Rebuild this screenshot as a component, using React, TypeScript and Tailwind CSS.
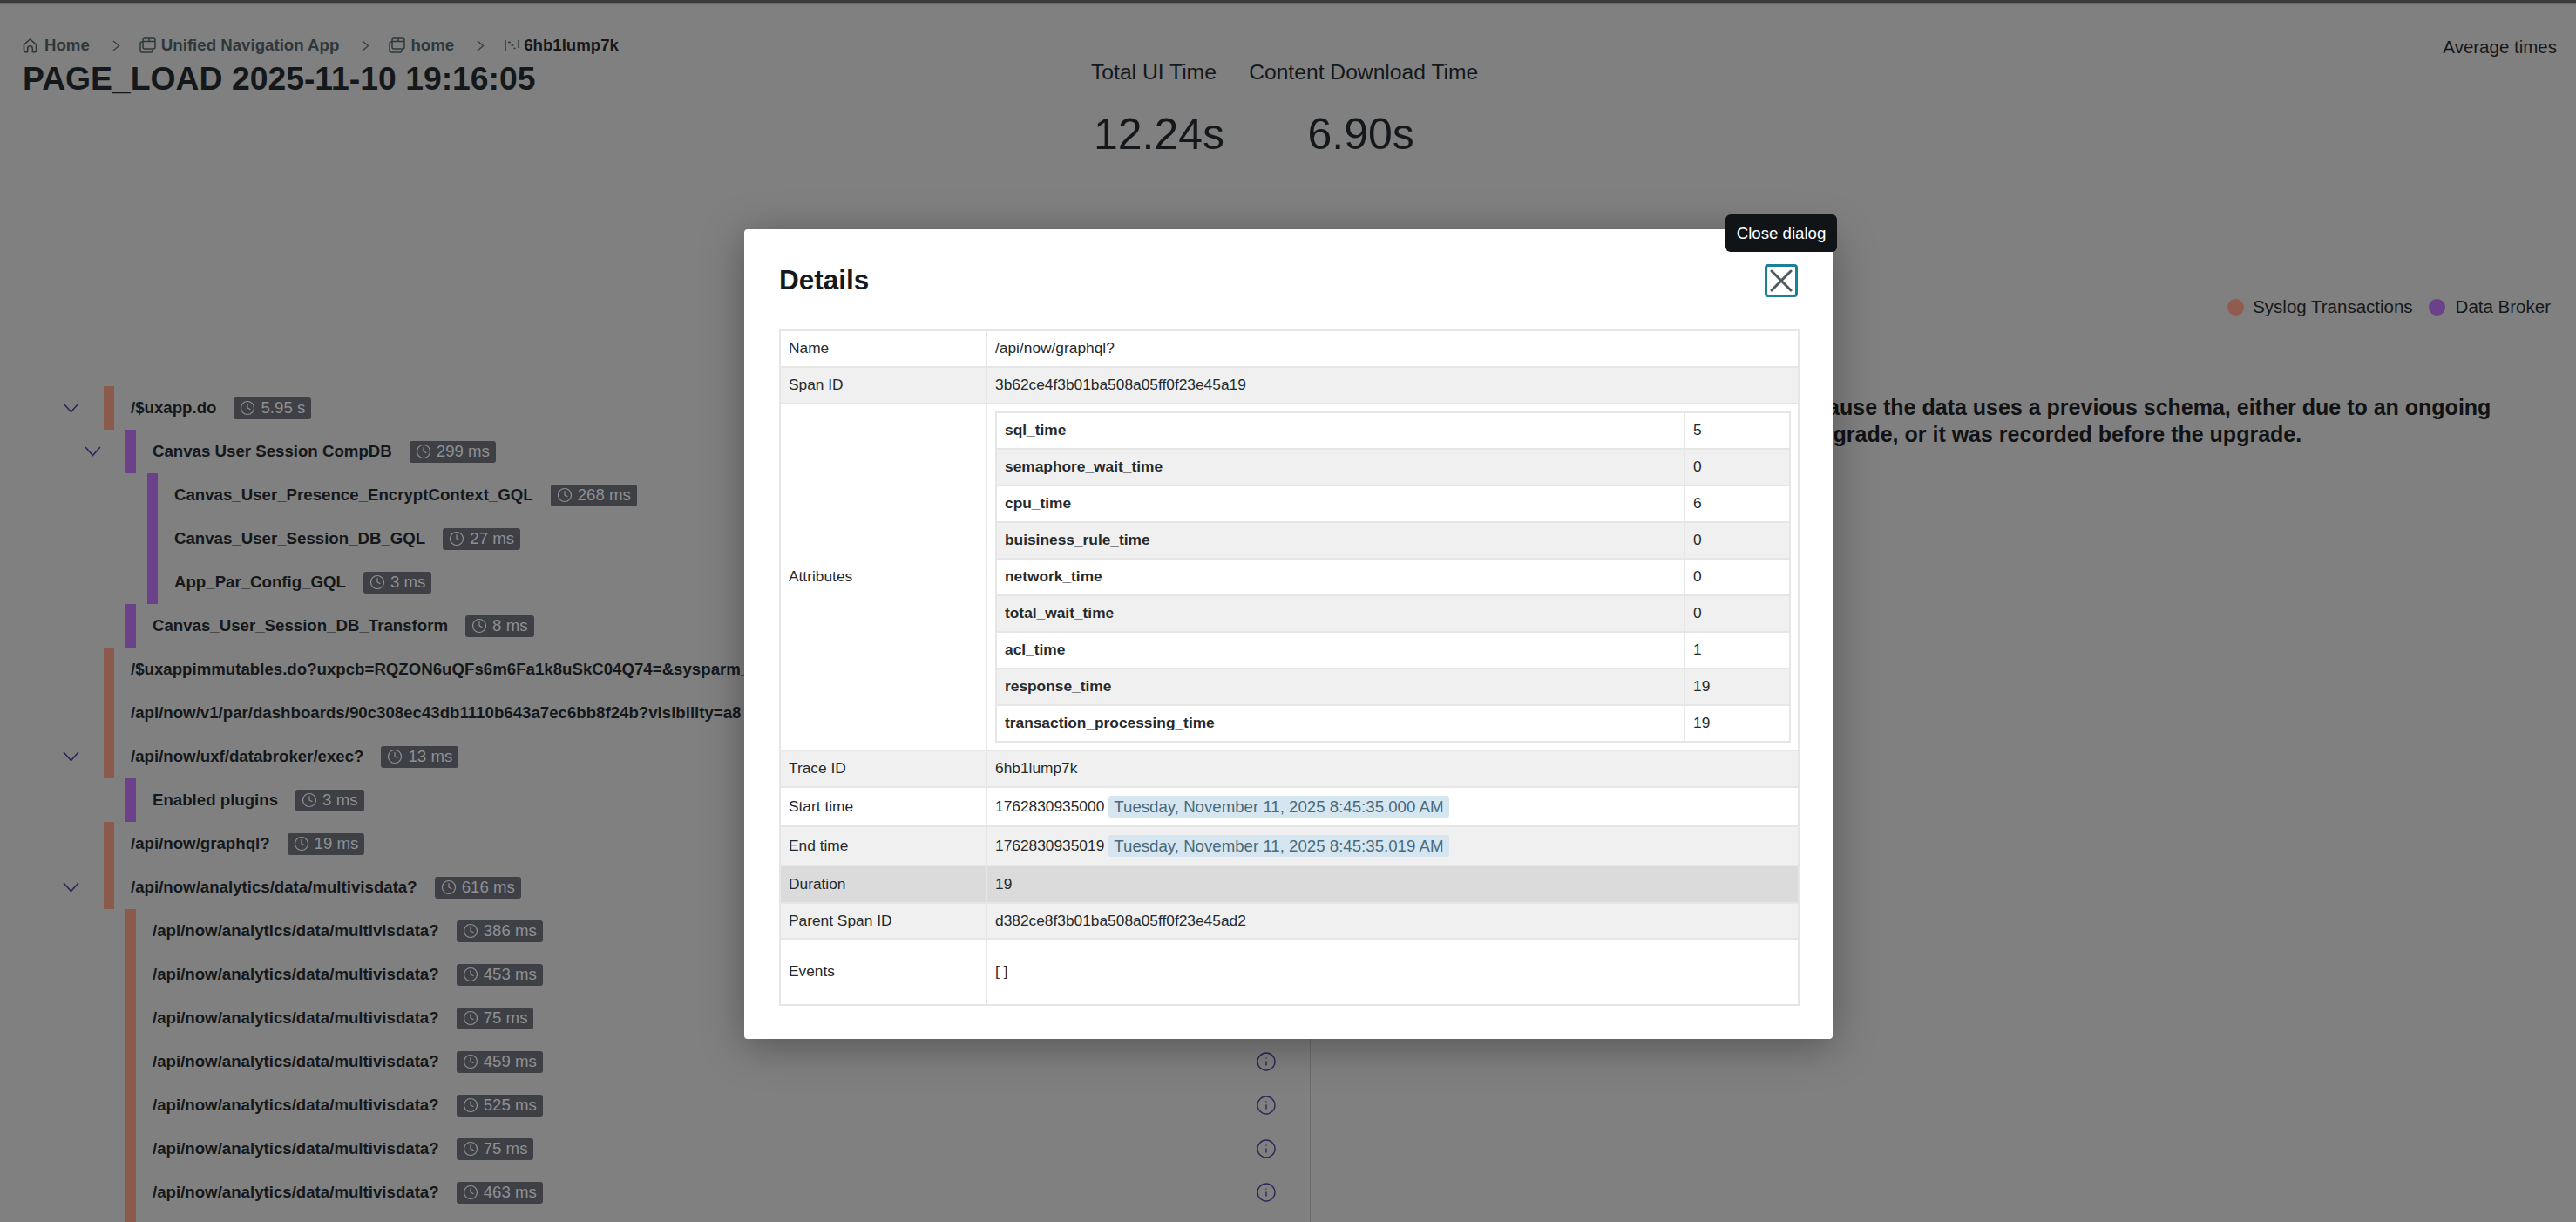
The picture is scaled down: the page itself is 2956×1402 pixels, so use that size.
import { Clock, Info } from "lucide-react";

type Level = 0 | 1 | 2;
type Row = { name: string; level: Level; kind: "s" | "d"; time?: string; open?: boolean };

const rows: Row[] = [
  { name: "/$uxapp.do", level: 0, kind: "s", time: "5.95 s", open: true },
  { name: "Canvas User Session CompDB", level: 1, kind: "d", time: "299 ms", open: true },
  { name: "Canvas_User_Presence_EncryptContext_GQL", level: 2, kind: "d", time: "268 ms" },
  { name: "Canvas_User_Session_DB_GQL", level: 2, kind: "d", time: "27 ms" },
  { name: "App_Par_Config_GQL", level: 2, kind: "d", time: "3 ms" },
  { name: "Canvas_User_Session_DB_Transform", level: 1, kind: "d", time: "8 ms" },
  { name: "/$uxappimmutables.do?uxpcb=RQZON6uQFs6m6Fa1k8uSkC04Q74=&sysparm_", level: 0, kind: "s" },
  { name: "/api/now/v1/par/dashboards/90c308ec43db1110b643a7ec6bb8f24b?visibility=a8", level: 0, kind: "s" },
  { name: "/api/now/uxf/databroker/exec?", level: 0, kind: "s", time: "13 ms", open: true },
  { name: "Enabled plugins", level: 1, kind: "d", time: "3 ms" },
  { name: "/api/now/graphql?", level: 0, kind: "s", time: "19 ms" },
  { name: "/api/now/analytics/data/multivisdata?", level: 0, kind: "s", time: "616 ms", open: true },
  { name: "/api/now/analytics/data/multivisdata?", level: 1, kind: "s", time: "386 ms" },
  { name: "/api/now/analytics/data/multivisdata?", level: 1, kind: "s", time: "453 ms" },
  { name: "/api/now/analytics/data/multivisdata?", level: 1, kind: "s", time: "75 ms" },
  { name: "/api/now/analytics/data/multivisdata?", level: 1, kind: "s", time: "459 ms" },
  { name: "/api/now/analytics/data/multivisdata?", level: 1, kind: "s", time: "525 ms" },
  { name: "/api/now/analytics/data/multivisdata?", level: 1, kind: "s", time: "75 ms" },
  { name: "/api/now/analytics/data/multivisdata?", level: 1, kind: "s", time: "463 ms" },
  { name: "/api/now/analytics/data/multivisdata?", level: 1, kind: "s", time: "75 ms" },
];

const attrs: [string, string][] = [
  ["sql_time", "5"],
  ["semaphore_wait_time", "0"],
  ["cpu_time", "6"],
  ["buisiness_rule_time", "0"],
  ["network_time", "0"],
  ["total_wait_time", "0"],
  ["acl_time", "1"],
  ["response_time", "19"],
  ["transaction_processing_time", "19"],
];

const indent: Record<Level, string> = { 0: "pl-[72px]", 1: "pl-[97px]", 2: "pl-[122px]" };

function Chevron() {
  return (
    <svg width="19" height="12" viewBox="0 0 19 12" fill="none" className="text-[#2b2858]">
      <path d="M1 1l8.5 9.5L18 1" stroke="currentColor" strokeWidth="1.6" />
    </svg>
  );
}

function HomeIcon() {
  return (
    <svg width="17" height="17" viewBox="0 0 17 17" fill="none" stroke="#2e383b" strokeWidth="1.6" strokeLinejoin="round">
      <path d="M1.5 7.2L8.5 1l7 6.2v7.3a1.3 1.3 0 0 1-1.3 1.3h-2.9v-4.2a2.8 2.8 0 0 0-5.6 0v4.2H2.8a1.3 1.3 0 0 1-1.3-1.3z" />
    </svg>
  );
}

function AppIcon() {
  return (
    <svg width="19" height="18" viewBox="0 0 19 18" fill="none" stroke="#2e383b" strokeWidth="1.5">
      <rect x="4" y="1" width="14" height="12" rx="2" />
      <path d="M4 4.5h14M11 1v3.5" />
      <path d="M4 5H3a2 2 0 0 0-2 2v8a2 2 0 0 0 2 2h10a2 2 0 0 0 2-2v-1.500" />
    </svg>
  );
}

function TraceIcon() {
  return (
    <svg width="17" height="13" viewBox="0 0 17 13" fill="none" stroke="#2e383b" strokeWidth="1.5">
      <path d="M1 0v13M16 0v9" />
      <path d="M4 2.500h3M7.500 6h3M10.500 9.500h2" />
    </svg>
  );
}

function Sep({ className }: { className: string }) {
  return (
    <svg width="9" height="13" viewBox="0 0 9 13" fill="none" stroke="#3a4144" strokeWidth="1.5" className={className}>
      <path d="M1 1l6.500 5.500L1 12" />
    </svg>
  );
}

function CloseIcon() {
  return (
    <svg width="26" height="26" viewBox="0 0 26 26" fill="none" stroke="#4b5a60" strokeWidth="3" strokeLinecap="round">
      <path d="M2 2l22 22M24 2L2 24" />
    </svg>
  );
}

function Badge({ time }: { time: string }) {
  return (
    <span className="ml-5 flex h-[25px] shrink-0 items-center gap-[6px] rounded-[3px] bg-[#3f4046] pl-[7px] pr-[7px] text-[18.67px] text-[#8d9094]">
      <Clock size={18} strokeWidth={1.6} />
      {time}
    </span>
  );
}

function TreeRow({ row }: { row: Row }) {
  return (
    <div className={`flex h-[50px] shrink-0 items-stretch pr-[38px] ${indent[row.level]}`}>
      <div className="flex w-[47px] shrink-0 items-center">{row.open ? <Chevron /> : null}</div>
      <div className={`w-3 shrink-0 ${row.kind === "s" ? "bg-[#8c5a4d]" : "bg-[#6b4289]"}`} />
      <div className="ml-[19px] flex min-w-0 items-center">
        <span className="whitespace-nowrap text-[18.67px] font-bold text-[#15181b]">{row.name}</span>
        {row.time ? <Badge time={row.time} /> : null}
      </div>
      <div className="ml-auto flex shrink-0 items-center">
        <Info size={24} strokeWidth={1.4} className="text-[#2b2858]" />
      </div>
    </div>
  );
}

function Stamp({ ms, date }: { ms: string; date: string }) {
  return (
    <span className="flex items-center">
      {ms}
      <span className="ml-[5px] rounded-[3px] bg-[#d5e6f0] px-[6px] py-[1px] text-[18.67px] leading-[23px] text-[#4b6a7b]">{date}</span>
    </span>
  );
}

const td = "border-2 border-[#e6e6e6] px-[9px] align-middle";

function MainRow({ label, bg, h, children }: { label: string; bg: string; h: string; children: React.ReactNode }) {
  return (
    <tr className={`${bg} ${h}`}>
      <td className={td}>{label}</td>
      <td className={td}>{children}</td>
    </tr>
  );
}

export default function App() {
  return (
    <div className="relative flex h-[1402px] w-full flex-col overflow-hidden bg-[#808080] font-['Liberation_Sans',Arial,sans-serif] text-[#15181b]">
      <div className="h-[5px] shrink-0 border-b border-[#6b6b6b] bg-[#3b3b3b]" />

      <header className="flex h-[332px] shrink-0 pl-[26px] pr-[22px]">
        <div className="w-[1226px] shrink-0 pt-[35px]">
          <nav className="flex h-6 items-center text-[18.67px] font-bold text-[#2e383b]">
            <HomeIcon />
            <span className="ml-2">Home</span>
            <Sep className="ml-[26px] mr-[22px]" />
            <AppIcon />
            <span className="ml-[6px]">Unified Navigation App</span>
            <Sep className="ml-[26px] mr-[22px]" />
            <AppIcon />
            <span className="ml-[6px]">home</span>
            <Sep className="ml-[26px] mr-[23px]" />
            <TraceIcon />
            <span className="ml-[5px] text-[#15181b]">6hb1lump7k</span>
          </nav>
          <h1 className="mt-[4px] text-[37.33px] font-bold leading-[44px]">PAGE_LOAD 2025-11-10 19:16:05</h1>
        </div>

        <div className="flex gap-[28px] pt-[63px]">
          <div>
            <div className="text-[24.67px] leading-[30px]">Total UI Time</div>
            <div className="mt-[26px] pl-[3px] text-[50px] leading-[60px]">12.24s</div>
          </div>
          <div className="text-center">
            <div className="text-[24.67px] leading-[30px]">Content Download Time</div>
            <div className="mt-[26px] pr-[6px] text-[50px] leading-[60px]">6.90s</div>
          </div>
        </div>

        <div className="ml-auto pt-[37px] text-[20.5px] leading-[24px]">Average times</div>
      </header>

      <div className="flex h-[30px] shrink-0 items-center justify-end pr-[29px] text-[20.5px]">
        <span className="h-[19px] w-[19px] rounded-full bg-[#8f5c4f]" />
        <span className="ml-[10px]">Syslog Transactions</span>
        <span className="ml-[18px] h-[19px] w-[19px] rounded-full bg-[#6b4289]" />
        <span className="ml-3">Data Broker</span>
      </div>

      <main className="mt-[76px] flex min-h-0 flex-1">
        <section className="flex w-[1504px] shrink-0 flex-col overflow-hidden border-r border-[#6c6c6c]">
          {rows.map((row, i) => (
            <TreeRow key={i} row={row} />
          ))}
        </section>
        <section className="min-w-0 flex-1 whitespace-nowrap pt-[9px] text-[25px] font-bold leading-[31px] text-[#101214]">
          <div className="pl-[550px]">because the data uses a previous schema, either due to an ongoing</div>
          <div className="pl-[569px]">upgrade, or it was recorded before the upgrade.</div>
        </section>
      </main>

      <div className="absolute inset-0 flex justify-center pl-[1px] pt-[263px]">
        <div className="h-[929px] w-[1249px] rounded-[4px] bg-white pl-[40px] pr-[38px] pt-[40px] text-[17.33px] text-[#262a2d] shadow-[0_8px_48px_rgba(0,0,0,0.35)]">
          <div className="flex h-[38px] items-center justify-between pr-[2px]">
            <h2 className="text-[31.5px] font-bold text-[#15191c]">Details</h2>
            <div className="relative h-[38px] w-[38px]">
              <button className="flex h-[38px] w-[38px] items-center justify-center rounded-[4px] border-[3px] border-[#1a809a]">
                <CloseIcon />
              </button>
              <div className="absolute -top-[57px] left-1/2 flex h-[43px] w-[128px] -translate-x-1/2 items-center justify-center whitespace-nowrap rounded-[6px] bg-[#101416] text-[18.67px] text-white">
                Close dialog
              </div>
            </div>
          </div>

          <table className="mt-[37px] w-[1171px] table-fixed border-collapse">
            <colgroup>
              <col className="w-[237px]" />
              <col />
            </colgroup>
            <tbody>
              <MainRow label="Name" bg="bg-white" h="h-[42px]">/api/now/graphql?</MainRow>
              <MainRow label="Span ID" bg="bg-[#f0f0f0]" h="h-[42px]">3b62ce4f3b01ba508a05ff0f23e45a19</MainRow>
              <MainRow label="Attributes" bg="bg-white" h="h-[398px]">
                <table className="w-[913px] table-fixed border-collapse">
                  <colgroup>
                    <col className="w-[790px]" />
                    <col />
                  </colgroup>
                  <tbody>
                    {attrs.map(([k, v], i) => (
                      <tr key={k} className={`h-[42px] ${i % 2 ? "bg-[#f0f0f0]" : "bg-white"}`}>
                        <td className={`${td} font-bold`}>{k}</td>
                        <td className={td}>{v}</td>
                      </tr>
                    ))}
                  </tbody>
                </table>
              </MainRow>
              <MainRow label="Trace ID" bg="bg-[#f0f0f0]" h="h-[42px]">6hb1lump7k</MainRow>
              <MainRow label="Start time" bg="bg-white" h="h-[45px]">
                <Stamp ms="1762830935000" date="Tuesday, November 11, 2025 8:45:35.000 AM" />
              </MainRow>
              <MainRow label="End time" bg="bg-[#f0f0f0]" h="h-[45px]">
                <Stamp ms="1762830935019" date="Tuesday, November 11, 2025 8:45:35.019 AM" />
              </MainRow>
              <MainRow label="Duration" bg="bg-[#dbdbdb]" h="h-[43px]">19</MainRow>
              <MainRow label="Parent Span ID" bg="bg-[#f0f0f0]" h="h-[41px]">d382ce8f3b01ba508a05ff0f23e45ad2</MainRow>
              <MainRow label="Events" bg="bg-white" h="h-[76px]">[ ]</MainRow>
            </tbody>
          </table>
        </div>
      </div>
    </div>
  );
}
